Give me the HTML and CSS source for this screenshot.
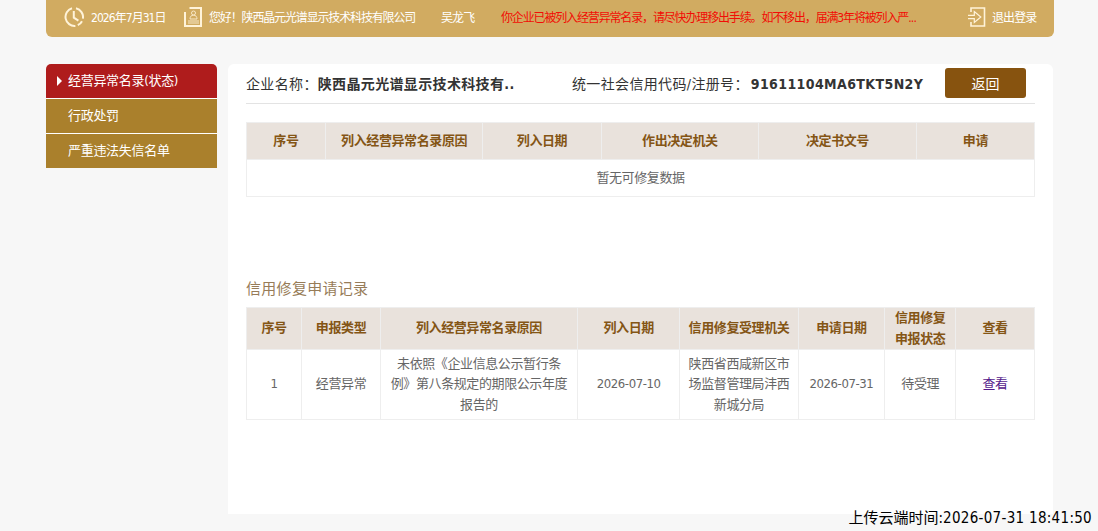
FILE: index.html
```
<!DOCTYPE html>
<html lang="zh-CN">
<head>
    <meta charset="utf-8">
    <title>信用修复</title>
    <link rel="stylesheet" href="styles.css">
</head>
<body>
    <div class="container">
        <div class="header">
            <svg class="icon-clock" width="20" height="20" viewBox="0 0 20 20">
                <path d="M12 1.3A9 9 0 0 1 18.9 11.6M18 14.2A9 9 0 0 1 13.8 18.2M11.4 18.9A9 9 0 0 1 8 1.3"/>
                <path d="M9.8 4v6.6l4.6 3"/>
            </svg>
            <span class="date">2026年7月31日</span>
            <svg class="icon-card" width="18" height="20" viewBox="0 0 18 20">
                <path d="M5.5 1H17v18H1V5" stroke-width="2"/>
                <g stroke-width="1" opacity="0.85">
                    <circle cx="9.5" cy="6" r="2"/>
                    <path d="M6 12c0-2.4 1.2-3.8 3.5-3.8S13 9.600 13 12zM4 14h11M4 16h11"/>
                </g>
            </svg>
            <span class="hello">您好！陕西晶元光谱显示技术科技有限公司</span>
            <span class="user">吴龙飞</span>
            <span class="warning">你企业已被列入经营异常名录，请尽快办理移出手续。如不移出，届满3年将被列入严<span class="dots">...</span></span>
            <svg class="icon-exit" width="18" height="20" viewBox="0 0 18 20">
                <path d="M3 5V1h13.500v18H3v-4" stroke-width="1.6"/>
                <path d="M0 8.300h6.300V4.600L12.800 10l-6.500 5.400v-3.700H0" stroke-width="1.2"/>
            </svg>
            <a class="logout">退出登录</a>
        </div>
        <div class="main">
            <ul class="menu">
                <li class="active">经营异常名录(状态)</li>
                <li>行政处罚</li>
                <li>严重违法失信名单</li>
            </ul>
            <div class="content">
                <div class="company">
                    <div class="company-name">企业名称：<strong>陕西晶元光谱显示技术科技有..</strong></div>
                    <div class="company-code">统一社会信用代码/注册号：<strong>91611104MA6TKT5N2Y</strong></div>
                    <button class="back-btn">返回</button>
                </div>
                <table class="list">
                    <colgroup>
                        <col class="w10"><col class="w20"><col class="w15"><col class="w20"><col class="w20"><col class="w15">
                    </colgroup>
                    <tr>
                        <th>序号</th>
                        <th>列入经营异常名录原因</th>
                        <th>列入日期</th>
                        <th>作出决定机关</th>
                        <th>决定书文号</th>
                        <th>申请</th>
                    </tr>
                    <tr>
                        <td colspan="6">暂无可修复数据</td>
                    </tr>
                </table>
                <h2>信用修复申请记录</h2>
                <table class="list record">
                    <colgroup>
                        <col class="w7"><col class="w10"><col class="w25"><col class="w13"><col class="w15"><col class="w11"><col class="w9"><col class="w10">
                    </colgroup>
                    <tr>
                        <th>序号</th>
                        <th>申报类型</th>
                        <th>列入经营异常名录原因</th>
                        <th>列入日期</th>
                        <th>信用修复受理机关</th>
                        <th>申请日期</th>
                        <th>信用修复<br>申报状态</th>
                        <th>查看</th>
                    </tr>
                    <tr>
                        <td>1</td>
                        <td>经营异常</td>
                        <td>未依照《企业信息公示暂行条<br>例》第八条规定的期限公示年度<br>报告的</td>
                        <td>2026-07-10</td>
                        <td>陕西省西咸新区市<br>场监督管理局沣西<br>新城分局</td>
                        <td>2026-07-31</td>
                        <td>待受理</td>
                        <td><a class="view" href="#">查看</a></td>
                    </tr>
                </table>
            </div>
        </div>
    </div>
    <div class="upload-time">上传云端时间:<span>2026-07-31 18:41:50</span></div>
</body>
</html>
```
FILE: styles.css
```
body {
    margin: 0;
    height: 531px;
    overflow: hidden;
    background-color: #f7f7f7;
    font-family: "DejaVu Sans Condensed", "Noto Sans CJK SC", sans-serif;
    font-size: 13px;
    color: #333;
}
.container {
    width: 1008px;
    margin-left: 46px;
}
.header {
    display: flex;
    align-items: center;
    height: 37px;
    padding: 0 17px 3px 18px;
    box-sizing: border-box;
    background-color: #d1ab61;
    border-radius: 0 0 6px 6px;
    color: #fff;
    font-size: 12px;
    letter-spacing: -1.15px;
    white-space: nowrap;
}
.header > span,
.logout {
    padding-bottom: 2px;
}
.header svg {
    flex: none;
    fill: none;
    stroke: #fff3d9;
    stroke-width: 1.5;
}
.header .icon-clock {
    stroke-width: 2;
}
.date {
    width: 75px;
    margin-left: 7px;
    letter-spacing: -0.95px;
}
.icon-card {
    margin-left: 18px;
}
.hello {
    width: 207px;
    margin-left: 7px;
}
.user {
    width: 34px;
    margin-left: 25px;
    letter-spacing: -0.9px;
}
.warning {
    width: 416px;
    margin-left: 26px;
    color: #f20d05;
}
.dots {
    letter-spacing: -0.8px;
}
.icon-exit {
    margin-left: auto;
}
.logout {
    width: 45px;
    margin-left: 6px;
    letter-spacing: -0.9px;
}
.main {
    display: flex;
    align-items: flex-start;
    margin-top: 27px;
}
.menu {
    width: 171px;
    margin: 0 11px 0 0;
    padding: 0;
    list-style: none;
    border-radius: 5px 5px 0 0;
    overflow: hidden;
}
.menu li {
    height: 34px;
    line-height: 34px;
    padding-left: 22px;
    border-top: 1px solid #fff;
    background-color: #aa802c;
    color: #fff;
    letter-spacing: -0.3px;
}
.menu .active {
    display: flex;
    align-items: center;
    padding-left: 11px;
    border-top: none;
    background-color: #af1c1c;
}
.menu .active::before {
    content: "";
    margin-right: 6px;
    border: 5px solid transparent;
    border-left-color: #fff;
    border-right: none;
}
.content {
    width: 825px;
    height: 450px;
    padding: 0 18px;
    box-sizing: border-box;
    background-color: #fff;
    border-radius: 6px 6px 0 0;
}
.company {
    display: flex;
    align-items: center;
    height: 40px;
    padding-bottom: 2px;
    box-sizing: border-box;
    border-bottom: 1px solid #e3e3e3;
    font-size: 14px;
    letter-spacing: 0.35px;
    white-space: nowrap;
}
.company-name {
    width: 326px;
}
.company-code {
    width: 373px;
}
.company-code strong {
    margin-left: 2px;
    letter-spacing: 0.4px;
}
.back-btn {
    width: 81px;
    height: 30px;
    padding: 0;
    border: none;
    border-radius: 3px;
    background-color: #87530f;
    color: #fff;
    font-family: inherit;
    font-size: 14px;
}
.list {
    width: 789px;
    margin-top: 18px;
    table-layout: fixed;
    border-collapse: collapse;
    line-height: 20.5px;
    text-align: center;
    letter-spacing: -0.4px;
    white-space: nowrap;
}
.list th,
.list td {
    height: 36px;
    padding: 0;
    border: 1px solid #eee;
}
.list th {
    background-color: #e9e2dc;
    color: #845515;
}
.list td {
    color: #666;
}
.w7 { width: 7%; }
.w9 { width: 9%; }
.w10 { width: 10%; }
.w11 { width: 11%; }
.w13 { width: 13%; }
.w15 { width: 15%; }
.w20 { width: 20%; }
.w25 { width: 25%; }
h2 {
    margin: 81px 0 0;
    color: #977c58;
    font-size: 15px;
    font-weight: normal;
    line-height: 22px;
    letter-spacing: 0.3px;
}
.record {
    margin-top: 7px;
}
.record th {
    height: 41px;
}
.record td {
    height: 69px;
}
.view {
    color: #551a8b;
    text-decoration: none;
}
/* sits over the bottom edge of the page */
.upload-time {
    position: absolute;
    right: 6px;
    bottom: 3px;
    color: #000;
    font-size: 15px;
    line-height: 20px;
    white-space: nowrap;
}
.upload-time span {
    letter-spacing: 0.3px;
}
```
